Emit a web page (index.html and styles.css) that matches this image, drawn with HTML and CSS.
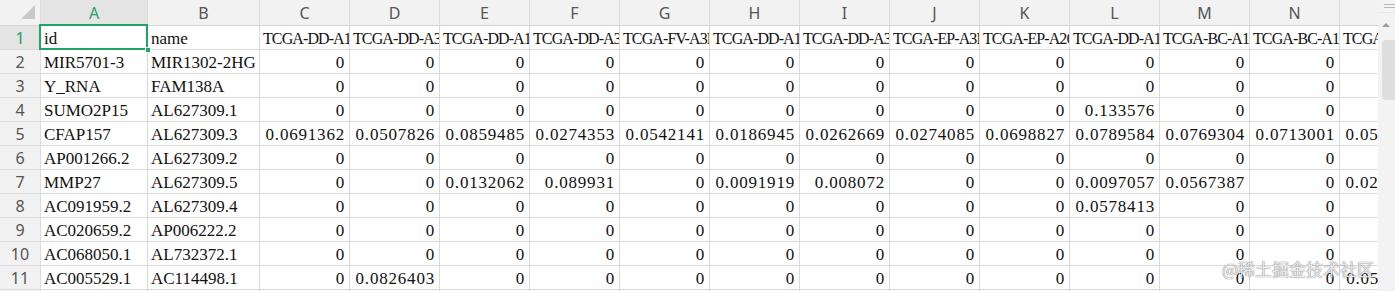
FILE: index.html
```html
<!DOCTYPE html>
<html lang="zh-CN">
<head>
<meta charset="utf-8">
<title>Sheet</title>
<link rel="stylesheet" href="styles.css">
</head>
<body>
<div class="app">
  <div class="sheet">
    <div class="grid">
      <div class="corner"><svg width="41" height="26" viewBox="0 0 41 26"><polygon points="21,19 35,19 35,5" fill="#c9c9c9"/></svg></div>
      <div class="ch on">A</div><div class="ch">B</div><div class="ch">C</div><div class="ch">D</div><div class="ch">E</div><div class="ch">F</div><div class="ch">G</div><div class="ch">H</div><div class="ch">I</div><div class="ch">J</div><div class="ch">K</div><div class="ch">L</div><div class="ch">M</div><div class="ch">N</div><div class="ch">O</div>

      <div class="rh on">1</div><div class="c sel">id<span class="handle"></span></div><div class="c">name</div><div class="c h">TCGA-DD-A1EA-11A</div><div class="c h">TCGA-DD-A3A6-11A</div><div class="c h">TCGA-DD-A1EB-11A</div><div class="c h">TCGA-DD-A39V-11A</div><div class="c h">TCGA-FV-A3R2-11A</div><div class="c h">TCGA-DD-A1EH-11A</div><div class="c h">TCGA-DD-A3A8-11A</div><div class="c h">TCGA-EP-A3RK-11A</div><div class="c h">TCGA-EP-A26S-11A</div><div class="c h">TCGA-DD-A1EJ-11A</div><div class="c h">TCGA-BC-A1IQ-11A</div><div class="c h">TCGA-BC-A1IR-11A</div><div class="c h">TCGA-BD-A2L6-11A</div>

      <div class="rh">2</div><div class="c">MIR5701-3</div><div class="c">MIR1302-2HG</div><div class="c n">0</div><div class="c n">0</div><div class="c n">0</div><div class="c n">0</div><div class="c n">0</div><div class="c n">0</div><div class="c n">0</div><div class="c n">0</div><div class="c n">0</div><div class="c n">0</div><div class="c n">0</div><div class="c n">0</div><div class="c n">0</div>

      <div class="rh">3</div><div class="c">Y_RNA</div><div class="c">FAM138A</div><div class="c n">0</div><div class="c n">0</div><div class="c n">0</div><div class="c n">0</div><div class="c n">0</div><div class="c n">0</div><div class="c n">0</div><div class="c n">0</div><div class="c n">0</div><div class="c n">0</div><div class="c n">0</div><div class="c n">0</div><div class="c n">0</div>

      <div class="rh">4</div><div class="c">SUMO2P15</div><div class="c">AL627309.1</div><div class="c n">0</div><div class="c n">0</div><div class="c n">0</div><div class="c n">0</div><div class="c n">0</div><div class="c n">0</div><div class="c n">0</div><div class="c n">0</div><div class="c n">0</div><div class="c n">0.133576</div><div class="c n">0</div><div class="c n">0</div><div class="c n">0</div>

      <div class="rh">5</div><div class="c">CFAP157</div><div class="c">AL627309.3</div><div class="c n">0.0691362</div><div class="c n">0.0507826</div><div class="c n">0.0859485</div><div class="c n">0.0274353</div><div class="c n">0.0542141</div><div class="c n">0.0186945</div><div class="c n">0.0262669</div><div class="c n">0.0274085</div><div class="c n">0.0698827</div><div class="c n">0.0789584</div><div class="c n">0.0769304</div><div class="c n">0.0713001</div><div class="c n">0.0512037</div>

      <div class="rh">6</div><div class="c">AP001266.2</div><div class="c">AL627309.2</div><div class="c n">0</div><div class="c n">0</div><div class="c n">0</div><div class="c n">0</div><div class="c n">0</div><div class="c n">0</div><div class="c n">0</div><div class="c n">0</div><div class="c n">0</div><div class="c n">0</div><div class="c n">0</div><div class="c n">0</div><div class="c n">0</div>

      <div class="rh">7</div><div class="c">MMP27</div><div class="c">AL627309.5</div><div class="c n">0</div><div class="c n">0</div><div class="c n">0.0132062</div><div class="c n">0.089931</div><div class="c n">0</div><div class="c n">0.0091919</div><div class="c n">0.008072</div><div class="c n">0</div><div class="c n">0</div><div class="c n">0.0097057</div><div class="c n">0.0567387</div><div class="c n">0</div><div class="c n">0.0283714</div>

      <div class="rh">8</div><div class="c">AC091959.2</div><div class="c">AL627309.4</div><div class="c n">0</div><div class="c n">0</div><div class="c n">0</div><div class="c n">0</div><div class="c n">0</div><div class="c n">0</div><div class="c n">0</div><div class="c n">0</div><div class="c n">0</div><div class="c n">0.0578413</div><div class="c n">0</div><div class="c n">0</div><div class="c n">0</div>

      <div class="rh">9</div><div class="c">AC020659.2</div><div class="c">AP006222.2</div><div class="c n">0</div><div class="c n">0</div><div class="c n">0</div><div class="c n">0</div><div class="c n">0</div><div class="c n">0</div><div class="c n">0</div><div class="c n">0</div><div class="c n">0</div><div class="c n">0</div><div class="c n">0</div><div class="c n">0</div><div class="c n">0</div>

      <div class="rh">10</div><div class="c">AC068050.1</div><div class="c">AL732372.1</div><div class="c n">0</div><div class="c n">0</div><div class="c n">0</div><div class="c n">0</div><div class="c n">0</div><div class="c n">0</div><div class="c n">0</div><div class="c n">0</div><div class="c n">0</div><div class="c n">0</div><div class="c n">0</div><div class="c n">0</div><div class="c n">0</div>

      <div class="rh">11</div><div class="c">AC005529.1</div><div class="c">AC114498.1</div><div class="c n">0</div><div class="c n">0.0826403</div><div class="c n">0</div><div class="c n">0</div><div class="c n">0</div><div class="c n">0</div><div class="c n">0</div><div class="c n">0</div><div class="c n">0</div><div class="c n">0</div><div class="c n">0</div><div class="c n">0</div><div class="c n">0.0541162</div>

      <div class="rh">12</div><div class="c"></div><div class="c"></div><div class="c"></div><div class="c"></div><div class="c"></div><div class="c"></div><div class="c"></div><div class="c"></div><div class="c"></div><div class="c"></div><div class="c"></div><div class="c"></div><div class="c"></div><div class="c"></div><div class="c"></div>
    </div>
  </div>
  <div class="vscroll">
    <div class="vs-menu"><svg width="17" height="13" viewBox="0 0 17 13"><rect x="6" y="4" width="11" height="1" fill="#b5b5b5"/><rect x="6" y="7" width="11" height="1" fill="#b5b5b5"/></svg></div>
    <div class="vs-up"><svg width="17" height="26" viewBox="0 0 17 26"><polygon points="8,10 12,14 4,14" fill="#9a9a9a"/></svg></div>
    <div class="vs-track"><div class="vs-thumb"></div></div>
  </div>
  <div class="watermark">@稀土掘金技术社区</div>
</div>
</body>
</html>
```
FILE: styles.css
```css
* { box-sizing: border-box; }
html, body { margin: 0; padding: 0; background: #fff; }
.app {
  position: relative;
  display: flex;
  width: 1395px;
  height: 291px;
  overflow: hidden;
}
.sheet {
  flex: 1;
  overflow: hidden;
  background: #fff;
}
.grid {
  display: grid;
  grid-template-columns: 41px 107px 112px repeat(13, 90px);
  grid-template-rows: 26px repeat(12, 24px);
  width: max-content;
}
.corner {
  background: #f2f2f2;
  border-right: 1px solid #dcdcdc;
  border-bottom: 1px solid #d4d4d4;
}
.corner svg { display: block; }
.ch, .rh {
  background: #f2f2f2;
  color: #555;
  font-family: "Noto Sans", "Open Sans", sans-serif;
  font-size: 16px;
  display: flex;
  align-items: center;
  justify-content: center;
  border-right: 1px solid #dcdcdc;
  border-bottom: 1px solid #d4d4d4;
}
.ch { padding-top: 1px; }
.rh { border-bottom-color: #dcdcdc; }
.ch.on, .rh.on {
  background: #e4e4e4;
  color: #21a366;
}
.c {
  position: relative;
  border-right: 1px solid #dadada;
  border-bottom: 1px solid #dadada;
  font-family: "Liberation Serif", "Times New Roman", serif;
  font-size: 17px;
  line-height: 25px;
  color: #111;
  white-space: nowrap;
  overflow: hidden;
  padding: 0 3px;
}
.c.n { text-align: right; padding-right: 4px; letter-spacing: 0.8px; }
.c.h { font-size: 16px; letter-spacing: -0.9px; }
.c.sel { overflow: visible; z-index: 2; }
.c.sel::after {
  content: "";
  position: absolute;
  left: -2px;
  top: -2px;
  right: -1px;
  bottom: -1px;
  border: 2px solid #21a366;
  pointer-events: none;
}
.handle {
  position: absolute;
  right: -4px;
  bottom: -4px;
  width: 6px;
  height: 6px;
  background: #21a366;
  border: 1px solid #fff;
  z-index: 3;
}
.vscroll {
  width: 17px;
  flex: none;
  background: #f3f3f3;
  display: flex;
  flex-direction: column;
}
.vs-menu { height: 13px; border-bottom: 1px solid #e6e6e6; }
.vs-up { height: 26px; }
.vs-menu svg, .vs-up svg { display: block; }
.vs-track { flex: 1; padding: 1px 0 0 4px; }
.vs-thumb {
  height: 60px;
  background: #dedede;
  border-radius: 4px 0 0 4px;
}
.watermark {
  position: absolute;
  left: 1222px;
  top: 257px;
  font-family: "Noto Sans CJK SC", "Noto Sans", sans-serif;
  font-size: 17px;
  line-height: 24px;
  color: rgba(255, 255, 255, 0.85);
  text-shadow: 0 0 1px rgba(90, 90, 90, 0.8), 0 0 1px rgba(90, 90, 90, 0.6);
  white-space: nowrap;
}
```
